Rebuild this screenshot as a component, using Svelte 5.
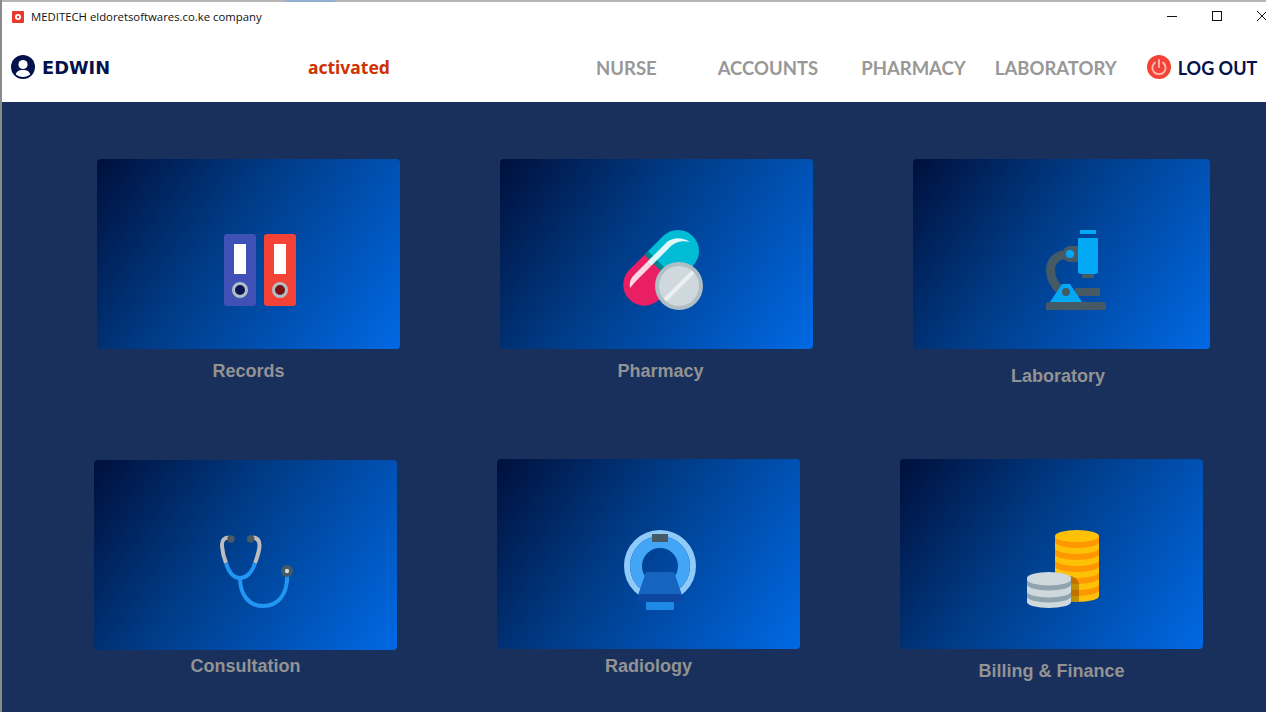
<script lang="ts">
	const rows = [
		[
			{ name: 'records', label: 'Records' },
			{ name: 'pharmacy', label: 'Pharmacy' },
			{ name: 'laboratory', label: 'Laboratory' }
		],
		[
			{ name: 'consultation', label: 'Consultation' },
			{ name: 'radiology', label: 'Radiology' },
			{ name: 'billing', label: 'Billing & Finance' }
		]
	];
	const nav = ['NURSE', 'ACCOUNTS', 'PHARMACY', 'LABORATORY'];

	// one curved band round a coin stack, edge at y
	const band = (x: number, w: number, y: number, h: number) =>
		`M${x} ${y}A${w / 2} 6 0 0 0 ${x + w} ${y}V${y + h}A${w / 2} 6 0 0 1 ${x} ${y + h}Z`;
</script>

<div class="window">
	<div class="chrome-strip"></div>
	<div class="titlebar">
		<svg class="app-icon" viewBox="0 0 12 12" width="12" height="12">
			<rect width="12" height="12" rx="1" fill="#e8392c" />
			<circle cx="6" cy="6" r="3" fill="#fff" />
			<circle cx="6" cy="6" r="1.2" fill="#e8392c" />
		</svg>
		<span class="app-title">MEDITECH eldoretsoftwares.co.ke company</span>
		<div class="window-controls">
			<svg viewBox="0 0 10 10" width="10" height="10"><path d="M0 5.5h10" stroke="#111" fill="none" /></svg>
			<svg viewBox="0 0 10 10" width="10" height="10"><rect x=".5" y=".5" width="9" height="9" stroke="#111" fill="none" /></svg>
			<svg viewBox="0 0 10 10" width="10" height="10"><path d="M0 0l10 10M10 0L0 10" stroke="#111" fill="none" /></svg>
		</div>
	</div>

	<header class="header">
		<div class="user">
			<svg viewBox="0 0 24 24" width="24" height="24">
				<circle cx="12" cy="12" r="12" fill="#03124a" />
				<circle cx="12" cy="9.5" r="4.6" fill="#fff" />
				<path d="M4.8 19.6c.6-3.4 3.4-4.6 7.2-4.6s6.6 1.2 7.2 4.6A10 10 0 0 1 12 22a10 10 0 0 1-7.2-2.4z" fill="#fff" />
			</svg>
			<span class="user-name">EDWIN</span>
		</div>
		<div class="status">activated</div>
		<nav class="nav">
			{#each nav as item}
				<span class="nav-item nav-{item.toLowerCase()}">{item}</span>
			{/each}
		</nav>
		<div class="logout">
			<svg viewBox="0 0 24 24" width="24" height="24">
				<circle cx="12" cy="12" r="12" fill="#f44336" />
				<path d="M7.9 7.6a6.6 6.6 0 1 0 8.2 0" fill="none" stroke="#ffb4ae" stroke-width="2" stroke-linecap="round" />
				<path d="M12 5v7" fill="none" stroke="#ffb4ae" stroke-width="2" stroke-linecap="round" />
			</svg>
			<span class="logout-text">LOG OUT</span>
		</div>
	</header>

	<main class="board">
		{#each rows as row}
			<div class="row">
				{#each row as tile}
					<div class="tile tile-{tile.name}">
						<div class="card">
							{#if tile.name === 'records'}
								<svg viewBox="0 0 72 72" width="72" height="72">
									<rect width="32" height="72" rx="3" fill="#3f51b5" />
									<rect x="40" width="32" height="72" rx="3" fill="#f44336" />
									<rect x="10" y="10" width="12" height="30" fill="#fff" />
									<rect x="50" y="10" width="12" height="30" fill="#fff" />
									<circle cx="16" cy="56" r="6.5" fill="#0d1450" stroke="#b0bec5" stroke-width="3" />
									<circle cx="56" cy="56" r="6.5" fill="#7a1212" stroke="#b0bec5" stroke-width="3" />
								</svg>
							{:else if tile.name === 'pharmacy'}
								<svg viewBox="0 0 82 82" width="82" height="82">
									<path d="M24.300 24 L54 53.700 L37.100 70.500 A21 21 0 0 1 7.400 40.800 Z" fill="#e91e63" />
									<path d="M24.300 24 L41.100 7.100 A21 21 0 0 1 70.800 36.900 L54 53.700 Z" fill="#00bcd4" />
									<path d="M24.300 24 L54 53.700" stroke="#00838f" stroke-width="5" fill="none" />
									<path d="M8 59 C7 53 9 49 13 45 L25 33 L29 37 L15 51 C11 55 10 57 8 59 Z" fill="#fbd7e3" />
									<path d="M29 37 L25 33 L45 13 C52 8 60 8 68 13 C60 11 54 13 49 17 Z" fill="#e0f7fa" />
									<circle cx="57" cy="57" r="24" fill="#b0bec5" />
									<circle cx="57" cy="57" r="20" fill="#cfd8dc" />
									<path d="M43 71 L71 43" stroke="#eceff1" stroke-width="4" fill="none" />
								</svg>
							{:else if tile.name === 'laboratory'}
								<svg viewBox="0 0 60 80" width="60" height="80">
									<path d="M24 24 C10 24 4.500 32 4.500 40 C4.500 50 9 56 16 62" fill="none" stroke="#455a64" stroke-width="9" />
									<path d="M32 16 H24 C20 16 16 20 16 24 C16 28 20 32 24 32 H32 Z" fill="#455a64" />
									<circle cx="24" cy="24" r="4" fill="#03a9f4" />
									<rect x="34" y="0" width="16" height="4" fill="#03a9f4" />
									<rect x="36" y="40" width="12" height="8" fill="#455a64" />
									<path d="M32 8 H52 V41 A3 3 0 0 1 49 44 H35 A3 3 0 0 1 32 41 Z" fill="#03a9f4" />
									<rect x="29" y="58" width="25" height="8" fill="#455a64" />
									<path d="M16 54 H24 L36 72 H4 Z" fill="#03a9f4" />
									<circle cx="20" cy="62" r="4" fill="#455a64" />
									<path d="M3 72 H57 A3 3 0 0 1 60 75 V80 H0 V75 A3 3 0 0 1 3 72 Z" fill="#455a64" />
								</svg>
							{:else if tile.name === 'consultation'}
								<svg viewBox="0 0 74 76" width="74" height="76">
									<path d="M8.500 4.500 C3 5 1.700 8 2 13 C2.500 20 4 25 6 30" fill="none" stroke="#bdbdbd" stroke-width="4" />
									<path d="M33 4.500 C38 5 39.700 8 39.500 13 C39 20 37 25 35 30" fill="none" stroke="#bdbdbd" stroke-width="4" />
									<path d="M6 30 C9 40 14 45 20 45 C26 45 32 40 35 30" fill="none" stroke="#2196f3" stroke-width="4" />
									<path d="M20 45 C20 62 29 73 43 73 C58 73 67.300 62 67.300 42" fill="none" stroke="#2196f3" stroke-width="4" />
									<circle cx="11" cy="6" r="3.700" fill="#4c5a62" />
									<circle cx="30.700" cy="6" r="3.700" fill="#4c5a62" />
									<circle cx="67" cy="38" r="6" fill="#455a64" />
									<circle cx="67" cy="38" r="2.200" fill="#cfd8dc" />
								</svg>
							{:else if tile.name === 'radiology'}
								<svg viewBox="0 0 80 80" width="80" height="80">
									<circle cx="40" cy="36" r="33" fill="none" stroke="#90caf9" stroke-width="6" />
									<circle cx="40" cy="36" r="24" fill="none" stroke="#42a5f5" stroke-width="12" />
									<rect x="32" y="4" width="16" height="8" fill="#455a64" />
									<path d="M26 42 H54 L62 65 H18 Z" fill="#1565c0" />
									<rect x="18" y="64" width="44" height="8" rx="2" fill="#0d47a1" />
									<rect x="26" y="72" width="28" height="8" rx="1" fill="#1e88e5" />
								</svg>
							{:else}
								<svg viewBox="0 0 72 78" width="72" height="78">
									<path d="M28 6 H72 V66 A22 6 0 0 1 28 66 Z" fill="#ffc107" />
									{#each [6, 18, 30, 42, 54] as y}
										<path d={band(28, 44, y, 6)} fill="#ff9800" />
									{/each}
									<ellipse cx="50" cy="6" rx="22" ry="6" fill="#ffc107" />
									<path d="M28 46 H44 C49 47 52 51 52 55 V71.900 C41 72 32 70 28 66 Z" fill="#000" opacity="0.25" />
									<path d="M0 48 H44 V72 A22 6 0 0 1 0 72 Z" fill="#cfd8dc" />
									{#each [49.5, 61.5] as y}
										<path d={band(0, 44, y, 5)} fill="#90a4ae" />
									{/each}
									<ellipse cx="22" cy="48" rx="22" ry="6" fill="#cfd8dc" />
								</svg>
							{/if}
						</div>
						<div class="label">{tile.label}</div>
					</div>
				{/each}
			</div>
		{/each}
	</main>
	<div class="edge-mark"></div>
</div>

<style>
	:global(body) {
		margin: 0;
		background: #19305c;
		overflow: hidden;
	}

	.window {
		position: relative;
		width: 1266px;
		height: 712px;
		display: flex;
		flex-direction: column;
		box-sizing: border-box;
		border-left: 2px solid #8a8a8a;
		overflow: hidden;
		font-family: 'Liberation Sans', sans-serif;
	}

	.edge-mark {
		position: absolute;
		left: -2px;
		top: 392px;
		width: 2px;
		height: 4px;
		background: #5d7fa8;
	}

	.chrome-strip {
		height: 2px;
		flex: none;
		background: linear-gradient(90deg, #b5b5b5 0 283px, #8fb0d0 283px 333px, #b5b5b5 333px);
	}

	.titlebar {
		height: 30px;
		flex: none;
		display: flex;
		align-items: center;
		background: #fff;
		padding-left: 10px;
	}

	.app-icon {
		margin-right: 7px;
		margin-top: -1px;
	}

	.app-title {
		font: 11.35px 'Open Sans', sans-serif;
		color: #111;
		margin-top: -2px;
	}

	.window-controls {
		margin-left: auto;
		display: flex;
		gap: 35px;
		width: 103px;
		flex: none;
		margin-right: -4px;
		margin-top: -3px;
	}

	.header {
		height: 70px;
		flex: none;
		display: flex;
		align-items: center;
		background: #fff;
		white-space: nowrap;
	}

	.user {
		display: flex;
		align-items: center;
		gap: 7px;
		flex: none;
		margin-left: 9px;
		font: bold 17.8px 'DejaVu Sans', sans-serif;
		color: #03124a;
		width: 297px;
	}

	.user-name {
		margin-top: 1px;
	}

	.user svg,
	.logout svg {
		flex: none;
	}

	.status {
		flex: none;
		font: bold 17.5px 'Noto Sans', sans-serif;
		color: #cc3300;
		width: 288px;
	}

	.nav {
		display: flex;
		flex: none;
		margin-top: 1px;
		font: bold 18.5px Lato, sans-serif;
		color: #989898;
	}

	.nav-accounts {
		margin-left: 61px;
	}

	.nav-pharmacy {
		margin-left: 43px;
	}

	.nav-laboratory {
		margin-left: 29px;
	}

	.logout {
		display: flex;
		align-items: center;
		flex: none;
		gap: 7px;
		margin-left: 30px;
		font: bold 18px Lato, sans-serif;
		color: #03124a;
	}

	.logout-text {
		margin-top: 1px;
	}

	.board {
		flex: 1;
		background: #19305c;
		padding-top: 57px;
	}

	.row {
		display: flex;
		height: 300px;
	}

	.tile {
		display: flex;
		flex-direction: column;
		align-items: center;
		width: 303px;
		flex: none;
		margin-left: 100px;
	}

	.card {
		width: 100%;
		height: 190px;
		flex: none;
		box-sizing: border-box;
		display: flex;
		align-items: center;
		justify-content: center;
		padding: 32px 0 0 23px;
		border-radius: 4px;
		background: linear-gradient(125deg, #00103c 0%, #003a84 40%, #0069e4 100%);
	}

	.label {
		margin-top: 12px;
		font-size: 18px;
		line-height: 21px;
		font-weight: bold;
		color: #939393;
	}

	.tile-records {
		margin-left: 95px;
	}

	.tile-pharmacy {
		width: 313px;
	}

	.tile-pharmacy .card {
		padding: 32px 0 0 13px;
	}

	.tile-pharmacy .label {
		margin-left: 8px;
	}

	.tile-laboratory {
		width: 297px;
	}

	.tile-laboratory .card {
		padding-left: 29px;
	}

	.tile-laboratory .label {
		margin-top: 17px;
		margin-right: 7px;
	}

	.tile-consultation {
		margin-left: 92px;
		margin-top: 1px;
	}

	.tile-consultation .label {
		margin-top: 6px;
	}

	.tile-radiology .label {
		margin-top: 7px;
	}

	.tile-billing .card {
		padding-top: 30px;
	}
</style>
